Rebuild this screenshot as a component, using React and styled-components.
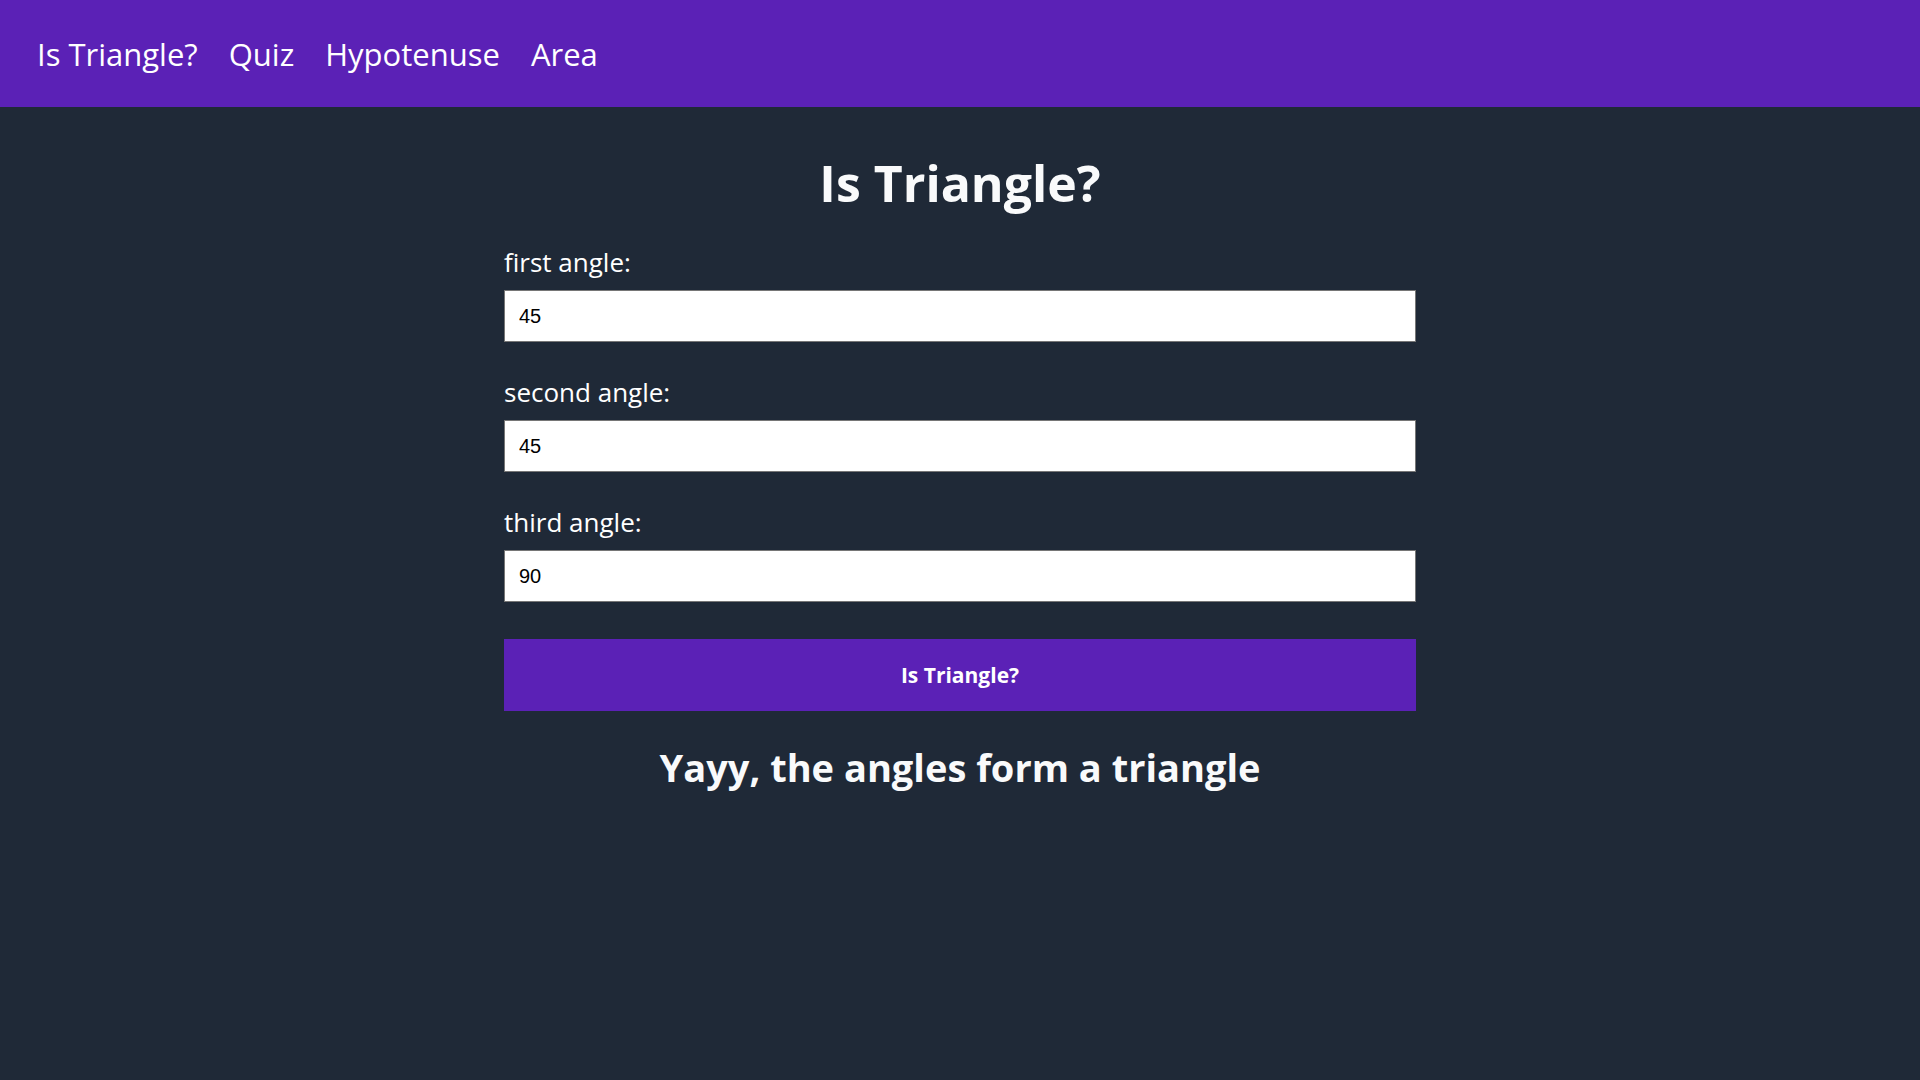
import React, { useState } from "react";
import styled, { createGlobalStyle } from "styled-components";

const GlobalStyle = createGlobalStyle`
  html, body {
    margin: 0;
    padding: 0;
    background: #1f2937;
    font-family: "Open Sans", "Noto Sans", sans-serif;
    color: #f9fafb;
  }
  #root {
    min-height: 100vh;
    background: #1f2937;
  }
  * { box-sizing: border-box; }
`;

const NavBar = styled.nav`
  height: 107px;
  background: #5b21b6;
  display: flex;
  align-items: center;
  gap: 31px;
  padding-left: 37px;
`;

const NavLink = styled.a`
  font-family: "Open Sans", sans-serif;
  font-size: 31px;
  color: #ffffff;
  text-decoration: none;
  cursor: pointer;
`;

const Main = styled.main`
  width: 912px;
  margin: 0 auto;
  display: flex;
  flex-direction: column;
  padding-top: 42px;
`;

const Title = styled.h1`
  margin: 0 0 27px;
  text-align: center;
  font-size: 50px;
  font-weight: 700;
  line-height: 68px;
  color: #f9fafb;
`;

const Field = styled.div`
  display: flex;
  flex-direction: column;
  margin-bottom: ${(p) => (p.$last ? "37px" : "32px")};
`;

const Label = styled.label`
  font-size: 26px;
  line-height: 36px;
  color: #ffffff;
  margin-bottom: 10px;
`;

const Input = styled.input`
  height: 52px;
  width: 100%;
  border: 1px solid #767676;
  border-radius: 0;
  background: #ffffff;
  padding: 0 14px;
  font-family: "Liberation Sans", Arial, sans-serif;
  font-size: 20px;
  color: #000000;
  outline: none;
`;

const Button = styled.button`
  height: 72px;
  width: 100%;
  border: none;
  background: #5b21b6;
  color: #ffffff;
  font-family: "Open Sans", sans-serif;
  font-weight: 700;
  font-size: 21px;
  cursor: pointer;
`;

const Result = styled.h2`
  margin: 30px 0 0;
  text-align: center;
  font-size: 38px;
  font-weight: 700;
  line-height: 52px;
  color: #f9fafb;
`;

export default function App() {
  const [a, setA] = useState("45");
  const [b, setB] = useState("45");
  const [c, setC] = useState("90");
  const fields = [
    { label: "first angle:", value: a, set: setA },
    { label: "second angle:", value: b, set: setB },
    { label: "third angle:", value: c, set: setC },
  ];
  return (
    <>
      <GlobalStyle />
      <NavBar>
        <NavLink>Is Triangle?</NavLink>
        <NavLink>Quiz</NavLink>
        <NavLink>Hypotenuse</NavLink>
        <NavLink>Area</NavLink>
      </NavBar>
      <Main>
        <Title>Is Triangle?</Title>
        {fields.map((f, i) => (
          <Field key={f.label} $last={i === fields.length - 1}>
            <Label>{f.label}</Label>
            <Input
              type="number"
              value={f.value}
              onChange={(e) => f.set(e.target.value)}
            />
          </Field>
        ))}
        <Button>Is Triangle?</Button>
        <Result>Yayy, the angles form a triangle</Result>
      </Main>
    </>
  );
}
